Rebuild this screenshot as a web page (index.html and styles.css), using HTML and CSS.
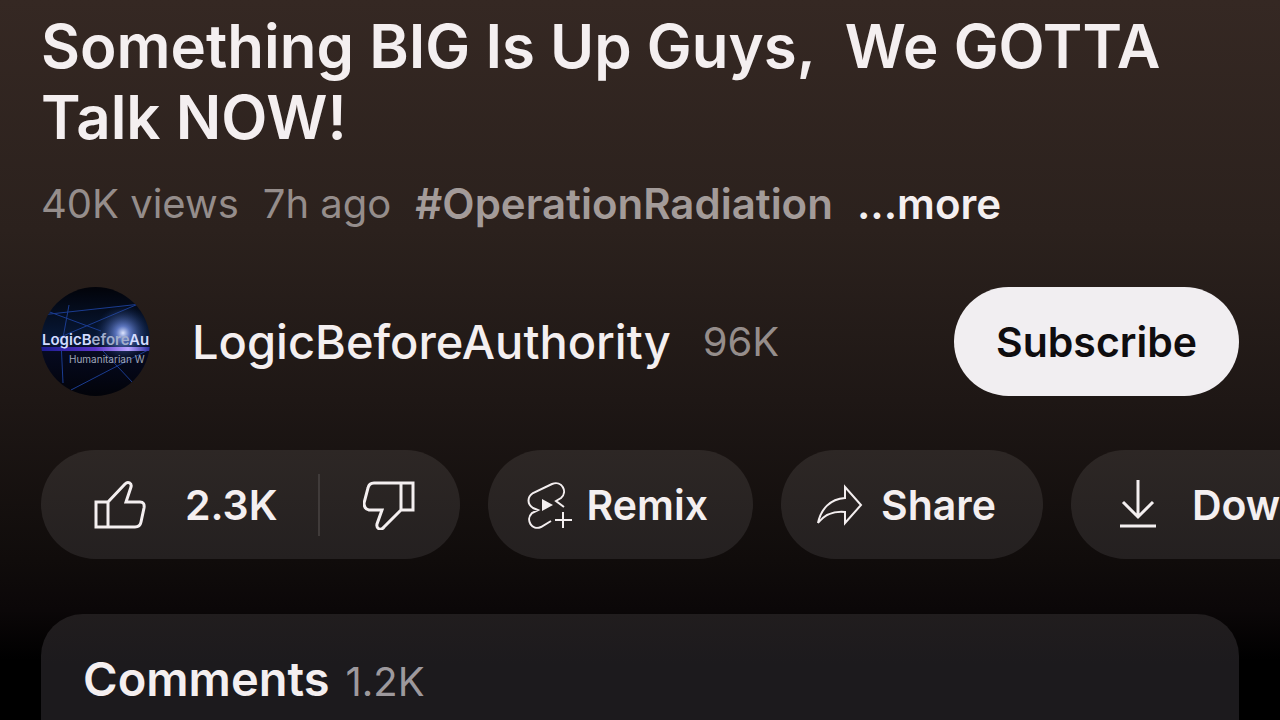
FILE: index.html
```html
<!DOCTYPE html>
<html lang="en">
<head>
    <meta charset="UTF-8">
    <meta name="viewport" content="width=device-width, initial-scale=1.0">
    <title>Something BIG Is Up Guys, We GOTTA Talk NOW!</title>
    <link rel="stylesheet" href="styles.css">
</head>
<body>
    <main class="watch">
        <h1 class="title">Something BIG Is Up Guys, &nbsp;We GOTTA Talk NOW!</h1>

        <div class="meta">
            <span>40K views</span>
            <span>7h ago</span>
            <a class="hashtag" href="#">#OperationRadiation</a>
            <button class="more" type="button">...more</button>
        </div>

        <div class="channel">
            <a class="avatar" href="#" aria-label="LogicBeforeAuthority channel">
                <svg viewBox="0 0 109 109">
                    <defs>
                        <radialGradient id="flare">
                            <stop offset="0" stop-color="#dfe6ff"/>
                            <stop offset="0.25" stop-color="#6f8be0" stop-opacity="0.8"/>
                            <stop offset="1" stop-color="#12306a" stop-opacity="0"/>
                        </radialGradient>
                        <linearGradient id="beam">
                            <stop offset="0" stop-color="#1c1c90"/>
                            <stop offset="0.5" stop-color="#5a34c8"/>
                            <stop offset="0.8" stop-color="#b9a4ff"/>
                            <stop offset="1" stop-color="#2c2ca0"/>
                        </linearGradient>
                        <linearGradient id="sky" x2="0" y2="1">
                            <stop offset="0" stop-color="#020309"/>
                            <stop offset="0.5" stop-color="#081a3a"/>
                            <stop offset="0.6" stop-color="#060a20"/>
                            <stop offset="1" stop-color="#020309"/>
                        </linearGradient>
                    </defs>
                    <rect width="109" height="109" fill="url(#sky)"/>
                    <g fill="none" stroke="#1b3c90" stroke-width="1">
                        <path d="M6 24 L60 44 M10 54 L109 12 M0 28 L109 16 M20 54 L22 96 M20 62 L28 18 M30 103 L109 62 M62 64 L92 96"/>
                    </g>
                    <circle cx="82" cy="46" r="28" fill="url(#flare)"/>
                    <rect y="60" width="109" height="4" fill="url(#beam)"/>
                    <text class="avatar-name" x="1" y="58"><tspan fill="#d3dcff">LogicB</tspan><tspan fill="#a3aecb">efore</tspan><tspan fill="#d3dcff">Au</tspan></text>
                    <text class="avatar-tag" x="28" y="76">Humanitarian W</text>
                </svg>
            </a>
            <a class="channel-name" href="#">LogicBeforeAuthority</a>
            <span class="subscribers">96K</span>
            <button class="subscribe" type="button">Subscribe</button>
        </div>

        <div class="actions">
            <div class="pill votes">
                <button class="like" type="button" aria-label="Like, 2.3K">
                    <svg class="icon" width="52" height="50" viewBox="0 0 52 50">
                        <path d="M2 22 H14 V47 H2Z M14 22 L31 4 C34 1 38 3 37 7 L32 22 H46 Q51 22 50 28 L47 42 Q46 47 41 47 H14"/>
                    </svg>
                    <span>2.3K</span>
                </button>
                <button class="dislike" type="button" aria-label="Dislike">
                    <svg class="icon" width="52" height="50" viewBox="0 0 52 50">
                        <path d="M50 30 H38 V3 H50Z M38 30 L21 47 C18 51 13 49 14 44 L19 30 H6 Q1 29 1 23 L5 8 Q6 3 11 3 H38"/>
                    </svg>
                </button>
            </div>
            <button class="pill remix" type="button">
                <svg class="icon thin" width="46" height="50" viewBox="0 0 46 50">
                    <path d="M24 41 L14 47 C5 51 -2 40 5 33 L11 30 L6 28 C0 24 0 17 6 13 L25 4 C35 0 41 12 34 18 L29 21 L37 27"/>
                    <path class="solid" d="M15 19 L26 25 L15 31Z"/>
                    <path d="M36 32 V48 M28 40 H45"/>
                </svg>
                <span>Remix</span>
            </button>
            <button class="pill share" type="button">
                <svg class="icon thin" width="46" height="42" viewBox="0 0 46 42">
                    <path d="M28 3 L44 21 L28 39 V28 C16 27 8 30 1 39 C4 25 13 15 28 14Z"/>
                </svg>
                <span>Share</span>
            </button>
            <button class="pill download" type="button">
                <svg class="icon download-icon" width="36" height="50" viewBox="0 0 36 50">
                    <path d="M18 0 V37 M3 22 L18 37 L33 22 M0 46 H36"/>
                </svg>
                <span>Download</span>
            </button>
        </div>

        <section class="comments">
            <h2>Comments</h2>
            <span class="comment-count">1.2K</span>
        </section>
    </main>
</body>
</html>
```
FILE: styles.css
```css
* {
    margin: 0;
    padding: 0;
    box-sizing: border-box;
}

html {
    background: #000;
}

body {
    min-height: 100vh;
    overflow: hidden;
    font-family: Inter, "Liberation Sans", sans-serif;
    font-size: 40px;
    line-height: 48px;
    color: #f4eff0;
    background: linear-gradient(#352823 0, #2b211d 230px, #1e1715 400px, #100c0b 560px, #0b0708 610px, #000 660px);
}

button {
    font: inherit;
    color: inherit;
    background: none;
    border: none;
    cursor: pointer;
}

a {
    color: inherit;
    text-decoration: none;
}

.watch {
    display: flex;
    flex-direction: column;
    min-height: 100vh;
    padding: 11px 41px 0;
}

.title {
    font-size: 60px;
    font-weight: 600;
    line-height: 71px;
}

.meta {
    display: flex;
    gap: 24px;
    margin-top: 27px;
    white-space: nowrap;
    color: #958d8b;
}

.hashtag,
.more {
    font-size: 42px;
    font-weight: 600;
}

.hashtag {
    color: #a39b99;
}

.more {
    color: #f4eff0;
}

.channel {
    display: flex;
    align-items: center;
    margin-top: 59px;
}

.avatar {
    width: 109px;
    height: 109px;
    margin-right: 42px;
    border-radius: 50%;
    overflow: hidden;
}

.avatar svg {
    display: block;
}

.avatar-name {
    font-size: 15px;
    font-weight: 600;
}

.avatar-tag {
    font-size: 10px;
    fill: #a0a8bb;
}

.channel-name {
    font-size: 47px;
    font-weight: 500;
}

.subscribers {
    margin-left: 32px;
    color: #958d8b;
}

.subscribe {
    height: 109px;
    margin-left: auto;
    padding: 0 42px;
    border-radius: 55px;
    font-size: 41px;
    font-weight: 600;
    color: #0f0d0f;
    background: #f1eef1;
}

.actions {
    display: flex;
    gap: 28px;
    margin-top: 54px;
    margin-right: -41px;
    overflow: hidden;
    font-size: 41px;
    font-weight: 600;
}

.pill {
    display: flex;
    flex-shrink: 0;
    align-items: center;
    height: 109px;
    border-radius: 55px;
    background: linear-gradient(#2d2725, #242020);
}

.like,
.dislike {
    display: flex;
    align-items: center;
    height: 62px;
}

.like {
    gap: 39px;
    padding: 0 40px 0 53px;
    border-right: 2px solid #403b3a;
}

.dislike {
    padding: 0 45px 0 43px;
}

.remix {
    gap: 14px;
    padding: 0 45px 0 39px;
}

.share {
    gap: 18px;
    padding: 0 47px 0 36px;
}

.download {
    gap: 36px;
    padding: 0 49px;
}

.icon {
    fill: none;
    stroke: #f4eff0;
    stroke-width: 3;
}

.icon.thin {
    stroke-width: 2;
}

.icon .solid {
    fill: #f4eff0;
    stroke: none;
}

.comments {
    display: flex;
    flex: 1;
    align-items: baseline;
    gap: 16px;
    margin-top: 55px;
    padding: 38px 42px 0;
    border-radius: 42px 42px 0 0;
    background: linear-gradient(#211d1e, #1c1a1d 50px);
}

.comments h2 {
    font-size: 47px;
    font-weight: 600;
    line-height: 54px;
}

.comment-count {
    color: #9d999d;
}
```
